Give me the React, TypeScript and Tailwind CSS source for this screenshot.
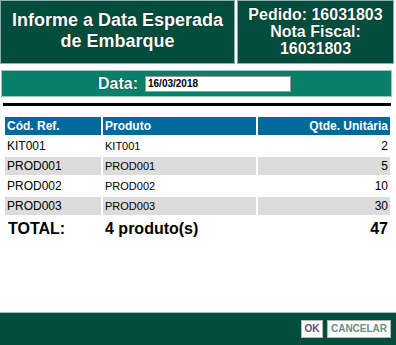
import React from 'react'

const items = [
  { ref: 'KIT001', produto: 'KIT001', qtde: 2 },
  { ref: 'PROD001', produto: 'PROD001', qtde: 5 },
  { ref: 'PROD002', produto: 'PROD002', qtde: 10 },
  { ref: 'PROD003', produto: 'PROD003', qtde: 30 },
]

export default function App() {
  const total = items.reduce((sum, i) => sum + i.qtde, 0)

  return (
    <div className="w-[396px] h-[345px] bg-white flex flex-col font-['Liberation_Sans',Arial,sans-serif] overflow-hidden">
      {/* cabeçalho */}
      <div className="flex gap-[2px] h-[64px]">
        <div className="w-[235px] bg-[#024d3c] border border-[#8fb0a8] flex flex-col items-center justify-center text-white font-bold text-[18px] leading-[21px] text-center [text-shadow:0_0_1px_#000] pb-[2px]">
          <span>Informe a Data Esperada</span>
          <span>de Embarque</span>
        </div>
        <div className="w-[157px] bg-[#024d3c] border border-[#8fb0a8] flex flex-col items-center justify-center text-white font-bold text-[16px] leading-[17px] text-center [text-shadow:0_0_1px_#000] pb-[2px]">
          <span>Pedido: 16031803</span>
          <span>Nota Fiscal:</span>
          <span>16031803</span>
        </div>
      </div>

      {/* data */}
      <div className="mt-[6px] ml-[1px] w-[391px] h-[27px] bg-[#077f69] border border-[#9cc7bb] flex items-center justify-center gap-[7px] pr-[4px]">
        <span className="text-white font-bold text-[16px] [text-shadow:0_0_1px_#000]">Data:</span>
        <div className="w-[146px] h-[16px] bg-white border border-[#999] flex items-center px-[2px] text-[10px] font-bold text-black">
          16/03/2018
        </div>
      </div>

      <div className="mt-[6px] ml-[3px] w-[388px] h-[3px] bg-black" />

      {/* tabela */}
      <table className="mt-[9px] ml-[3px] w-[389px] border-separate border-spacing-[2px] text-[12px]">
        <thead>
          <tr className="bg-[#00699b] text-white h-[18px]">
            <th className="w-[96px] text-left font-bold px-[2px] py-0">Cód. Ref.</th>
            <th className="w-[153px] text-left font-bold px-[2px] py-0">Produto</th>
            <th className="text-right font-bold px-[2px] py-0">Qtde. Unitária</th>
          </tr>
        </thead>
        <tbody>
          {items.map((item, idx) => (
            <tr key={item.ref} className={`h-[18px] ${idx % 2 === 1 ? 'bg-[#dcdcdc]' : 'bg-white'} text-black`}>
              <td className="px-[2px] py-0">{item.ref}</td>
              <td className="px-[2px] py-0 text-[11px]">{item.produto}</td>
              <td className="px-[2px] py-0 text-right">{item.qtde}</td>
            </tr>
          ))}
          <tr className="h-[20px] text-black font-bold text-[16px]">
            <td className="px-[3px] py-0">TOTAL:</td>
            <td className="px-[2px] py-0">{items.length} produto(s)</td>
            <td className="px-[2px] py-0 text-right">{total}</td>
          </tr>
        </tbody>
      </table>

      {/* rodapé */}
      <div className="mt-auto h-[33px] bg-[#024d3c] border-t border-[#a9c0ba] flex items-center justify-end gap-[4px] pr-[5px]">
        <button className="h-[18px] w-[22px] bg-white border border-[#b5b5b5] text-[10px] font-bold text-[#5b4d7c] leading-none">
          OK
        </button>
        <button className="h-[18px] w-[64px] bg-white border border-[#b5b5b5] text-[10px] font-bold text-[#6a8f7a] leading-none">
          CANCELAR
        </button>
      </div>
    </div>
  )
}
